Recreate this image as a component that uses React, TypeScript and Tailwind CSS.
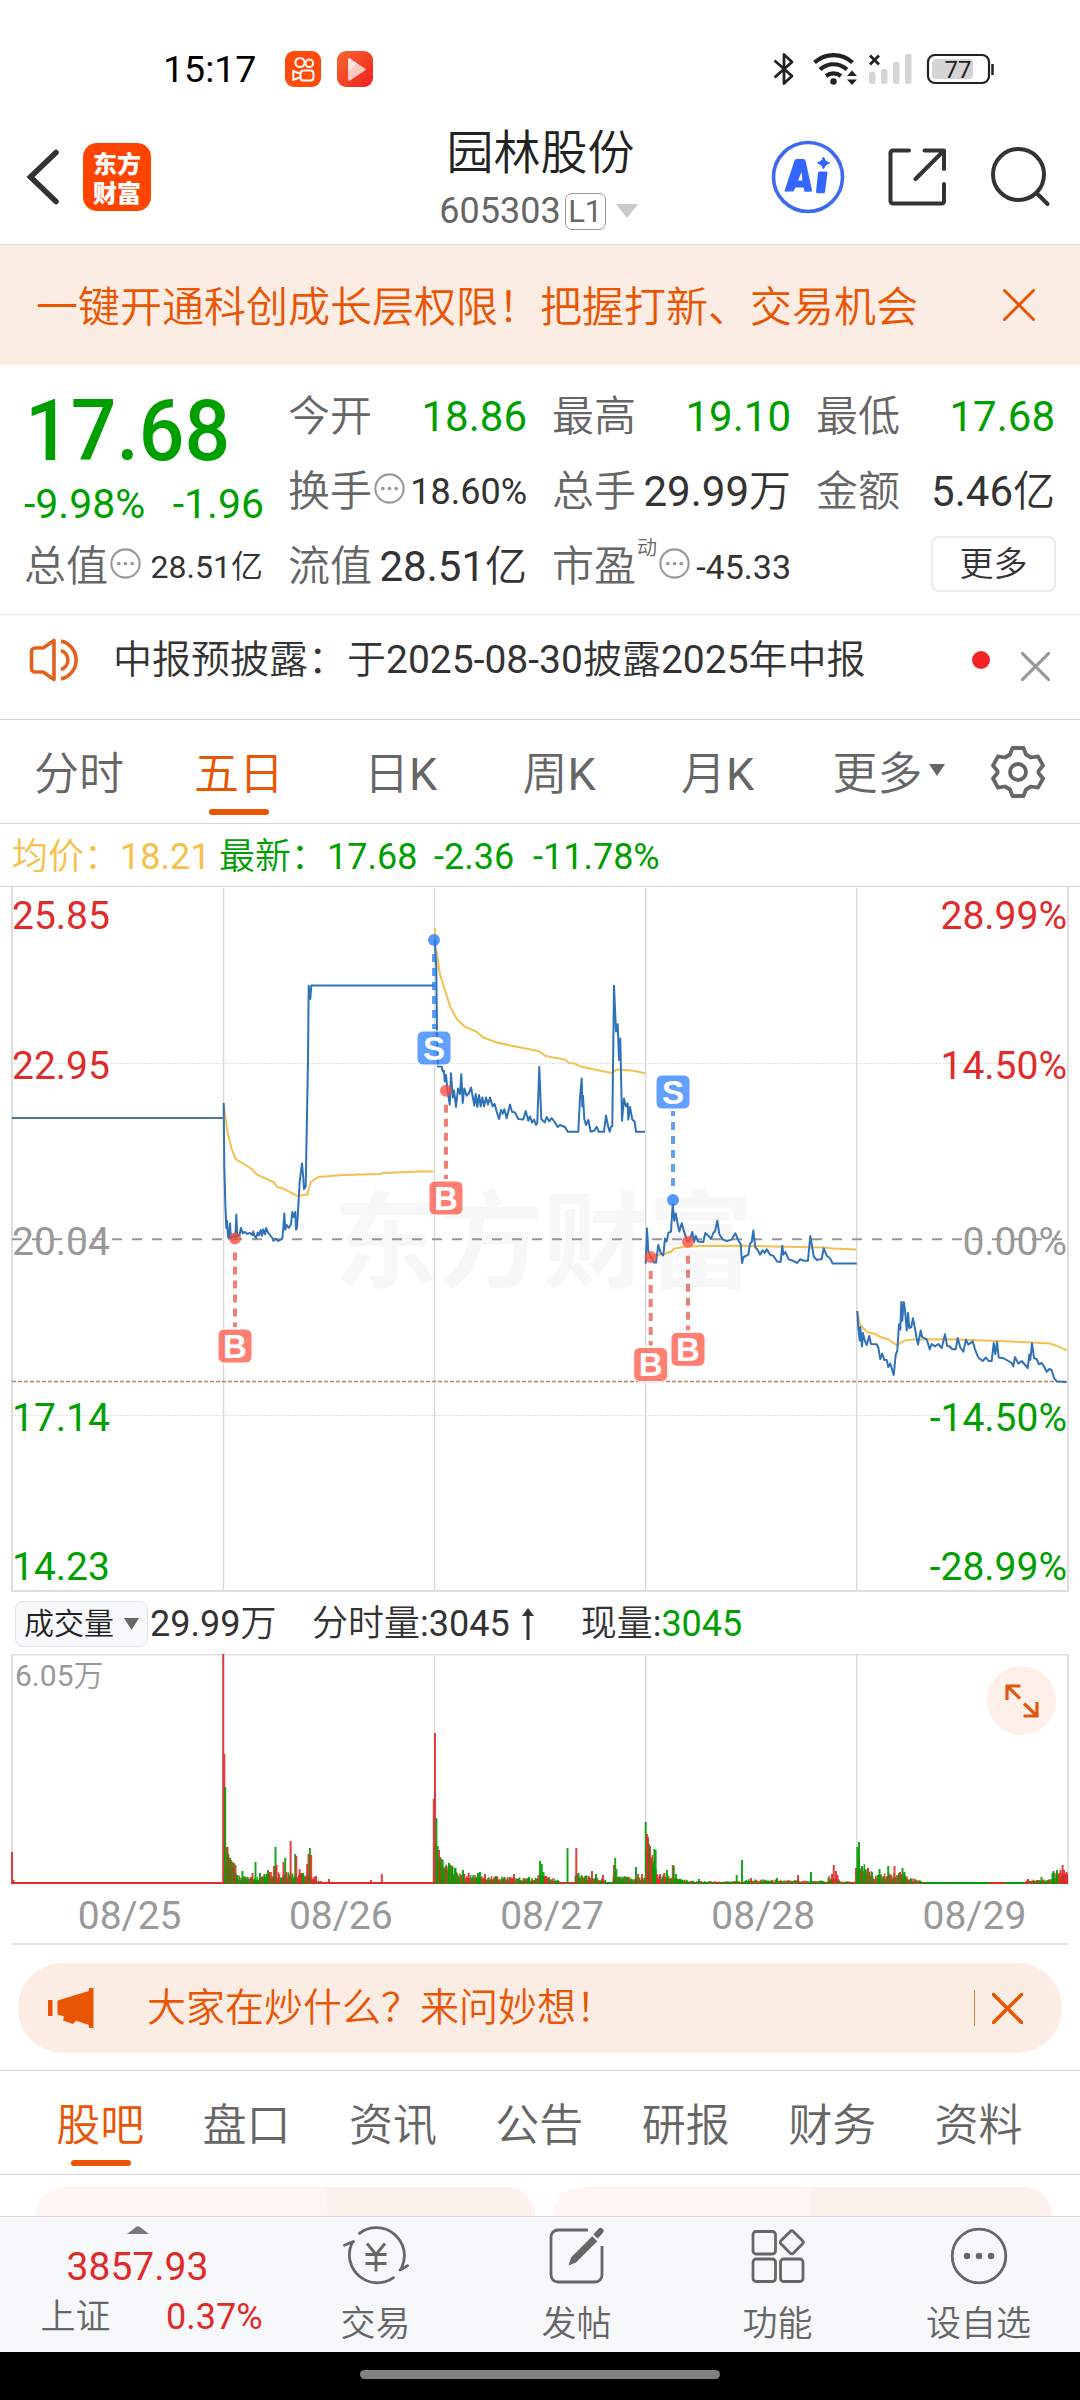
import React from "react";

const UP = "#e02b2b";
const DOWN = "#009f00";

const DAYS = ["08/25", "08/26", "08/27", "08/28", "08/29"];
const DAY_LINES = [223.5, 434.5, 645.7, 856.7];

const PERIODS = ["日K", "周K", "月K"];
const SECTIONS = ["股吧", "盘口", "资讯", "公告", "研报", "财务", "资料"];

// intraday price, one polyline per trading day
const PRICE_LINES = [
  "12,1118 222.7,1118",
  "223.7,1103 224.3,1167 225.3,1203 226.3,1228 227,1220.7 228,1236.8 229,1238.6 230,1223.6 231,1238.6 233.3,1235 235.3,1238.6 236.3,1214.6 237.3,1236.8 239.3,1235.7 241,1228 242.7,1233.2 245,1232 247.3,1234 250,1232.9 252.3,1235 253.3,1231.4 254.3,1235.7 256,1238 257.7,1232.5 259,1235.4 260.7,1230 262,1235.7 263.3,1229.3 265,1234.3 266.3,1228 267.7,1232 270,1235 272.3,1238 273.3,1240.7 275.3,1238.6 278.3,1241 282.3,1238.6 283.3,1228 284.3,1213.6 285.3,1229.6 286.7,1225 288.7,1228 291,1224.3 292.3,1212 293.7,1217 295.3,1212 296,1229.6 297,1228 298.3,1206.4 299.7,1181.4 302,1163.6 303.3,1178 304,1189.3 305.7,1186.8 308,1060 308.7,985.7 310.3,999 311.3,985.5 434,985.5",
  "434.7,940 436.3,967 437,1031.4 438,1066.4 441.7,1066.4 442.7,1071.4 444,1070.7 444.7,1081.4 446,1075 447.3,1088.6 449.7,1104.6 451,1073.2 452.7,1097.5 454,1090.4 456,1107 458,1088.6 460,1094 461.3,1074.3 462.7,1103 464.3,1088.6 466.7,1095.7 469,1093 471,1087.5 472.7,1096.4 474.3,1105.7 475.7,1094 477.3,1107 479,1095 480.7,1106.4 482.3,1097.5 484,1106.4 486,1097.5 488,1104.6 490,1097.5 492.7,1106.4 494.7,1104 496.7,1111.8 499,1119 501,1110 502.7,1113.6 504.3,1109.3 506.7,1118.2 510,1104.6 512,1111.8 515,1112.5 518.3,1119 523.3,1119.6 525.7,1111 528.3,1120.7 530,1116.4 532,1122.5 534,1119.6 536,1125 537.3,1122.5 539.3,1067 541.3,1119 544.7,1122.5 546.7,1117 549.3,1121.4 551.7,1118 555,1122.5 557.7,1127 560,1125 565,1127 567.7,1131.8 578.3,1131.8 580,1097.5 581.7,1078.6 582.3,1106.4 583,1095.7 584.3,1119 586,1125 588.3,1120 590.7,1131.8 594.3,1130.7 596.7,1126.8 598.7,1131.8 604,1131.8 606,1115.4 608,1126 609.7,1131.8 611,1127 612.3,1126 614,985.7 616,1031.4 617.7,1024.3 619,1060 620.3,1038.6 622,1120.7 624,1098.6 626,1106.4 627.7,1103.6 628.3,1119.6 630,1107 632.3,1119.6 634.7,1121.8 636,1131.8 645,1131.8",
  "645.7,1263.6 647,1228.6 648.3,1251 650.7,1257 652.7,1260 654,1262.5 656,1262.5 658.3,1245 660.7,1253 663.3,1255.4 665,1238.6 666.7,1241.4 668.3,1233.2 671,1231.4 672.7,1204.6 674.3,1220.7 675.7,1213.6 677.7,1224.3 679.3,1231.4 681.7,1223.2 684,1231.4 687.3,1241.4 689.3,1241.4 692.3,1232 694,1242 695.7,1235.7 698,1241.4 703.3,1242 705.3,1233 708.3,1235.7 711,1239 713.3,1233 715,1231.4 717.3,1220.7 719.3,1234.3 722.7,1239.3 726.7,1241 731.7,1239.6 735.3,1233.2 738.3,1240.4 740.7,1244 742,1263 743.7,1257 748.3,1254.6 750,1244 751.7,1242 753.3,1230.4 755.3,1247.5 757.3,1249.3 760,1254.6 762.7,1250.4 764.7,1253 766.7,1249.3 770,1254.6 773.3,1255.7 777.3,1261.8 780.7,1261.8 782.3,1245.7 783.3,1254.6 785.3,1252 788.7,1259.3 792.7,1260.7 797.3,1263 800,1259.3 804,1260.7 808,1260.7 810.3,1236 812,1245.7 813.7,1256.4 816.7,1260 821.7,1259 823.7,1248.2 826.7,1255.7 830,1258.2 832.7,1263.6 856.7,1263.6",
  "857.3,1311 858.3,1328 859.7,1340.4 860.3,1327 862,1346.4 863,1333 864.7,1340.4 866.7,1345 869.3,1336 871,1344 876.7,1344.3 878.3,1347.5 880.3,1359 882.3,1353.6 884.3,1360 886.7,1360 888.3,1367 890.3,1363.6 893.7,1375 895.7,1354.6 897.3,1351 899,1324.3 900.3,1329.6 901.3,1302 902.3,1320.7 903.7,1302 905,1310 906.7,1330.4 908,1313 909.3,1328 911.3,1327 913,1318.2 915,1328.6 916.7,1338.6 918,1344.6 920.7,1330.4 922,1336.8 926.7,1339.3 929.7,1349.3 931.7,1344 935,1346.4 938.3,1344 941.7,1348.2 945,1334.3 947,1345.7 950,1346.8 952.3,1349.3 955.7,1349.3 957.7,1338 960.3,1347.5 963.3,1351.8 966,1339.6 968.3,1344.6 972.7,1341.4 975,1349.3 978.3,1357.5 982.7,1361 986,1357.5 988.7,1361 991.7,1361 993.7,1343 995.3,1354 997,1342 998.7,1357.5 1003.3,1358.2 1008.3,1361 1011.7,1363 1013.3,1366.4 1015,1357 1018.3,1363.6 1021.7,1361 1027.7,1368 1029.3,1354.6 1030.3,1360 1032,1343.2 1034,1358.2 1036.7,1359 1039,1364.3 1041.7,1363 1044.3,1367 1046.7,1371.8 1049.3,1369 1051.7,1370 1054,1378 1056.7,1381.4 1066.7,1382",
];

const AVERAGE_LINES = [
  "12,1118 222.7,1118",
  "224,1106.4 227.3,1131.4 231.7,1149.3 235.7,1159 251.7,1169 256.7,1174.3 273.3,1182 277.3,1187 283.3,1188.6 297.3,1196 307.3,1194.6 310.7,1182 318.3,1177 343.3,1175 380,1174 383.3,1173 420,1171.4 433.3,1171.4",
  "435,928 435.3,945.7 437.3,956.4 440,974.3 446.7,995.7 450,1006.4 456.7,1019 465,1026.8 476,1031.4 483.3,1037.5 496.7,1042.5 516.7,1046.8 538.3,1051 545.7,1056 565,1059.6 569.3,1063 575,1063.6 580,1066.4 593.3,1069.3 611.7,1073 616.7,1069.6 633.3,1070.7 645,1073.2",
  "645.7,1260 653.3,1255.7 663.3,1254 670.7,1252 674,1248.6 683.3,1247 700,1246 740,1245.7 783.3,1246.8 823.3,1247.5 833.3,1248.6 856,1249.6",
  "857.3,1311.8 860,1324.3 866.7,1332 875,1334 881.7,1337.5 887.3,1339 896.7,1345 905,1340.4 913.3,1339.6 950,1339.3 983.3,1340.4 1016.7,1341.8 1050,1343.6 1058.3,1346.4 1066.7,1350.4",
];

type Trade = { side: "B" | "S"; x: number; dot: number; badge: number };

const TRADES: Trade[] = [
  { side: "B", x: 235, dot: 1238.6, badge: 1346 },
  { side: "S", x: 434, dot: 940, badge: 1048 },
  { side: "B", x: 446, dot: 1090.7, badge: 1198 },
  { side: "S", x: 673, dot: 1200, badge: 1092 },
  { side: "B", x: 650.7, dot: 1257, badge: 1364.5 },
  { side: "B", x: 688, dot: 1241.8, badge: 1349.3 },
];

// [x, height, direction]
const VOLUME_PEAKS: [number, number, "u" | "d"][] = [
  [12, 32, "u"], [13.5, 4, "u"],
  [223.2, 230, "u"], [224.3, 130, "u"], [225.2, 97, "d"], [226.5, 37, "d"], [227.5, 37, "u"], [228.3, 30, "d"],
  [230, 26, "u"], [231.2, 24, "d"], [232.4, 22, "u"], [234, 21, "d"], [235.5, 19, "u"], [237, 9, "d"],
  [242.4, 13, "d"], [252.5, 11, "u"], [255.5, 22, "d"], [260, 11, "d"], [264.5, 10, "d"], [268, 14, "d"], [269.5, 12, "u"],
  [274, 18, "u"], [275.5, 37, "d"], [276.6, 19, "u"], [283.4, 22, "u"], [285.2, 26, "d"], [286.2, 12, "u"],
  [290.6, 43, "u"], [295.2, 30, "d"], [296.3, 28, "u"], [299.6, 15, "u"], [301, 11, "u"], [303, 11, "d"],
  [307.2, 20, "u"], [308.5, 30, "u"], [309.9, 36, "d"], [311.2, 29, "u"], [314, 7, "u"], [316, 8, "u"],
  [329, 5, "u"], [371, 4, "u"], [381.8, 10, "u"],
  [433.8, 85, "u"], [435, 151, "u"], [436.4, 66, "d"], [437.6, 38, "d"], [439, 34, "u"], [440.3, 27, "d"],
  [442.7, 24, "d"], [446, 16, "u"], [449, 21, "d"], [452.5, 18, "d"], [455.5, 16, "d"], [463, 14, "d"], [468.6, 11, "u"],
  [478, 11, "d"], [480, 12, "d"], [485, 10, "u"], [496, 8, "d"], [514, 10, "u"], [529, 7, "d"], [538.5, 9, "u"],
  [540, 23, "d"], [541.8, 20, "d"], [543.5, 12, "d"], [545, 8, "u"], [567.5, 36, "d"], [576.3, 36, "u"], [578.5, 11, "d"],
  [592, 13, "u"], [596, 10, "d"], [603, 9, "u"], [614, 19, "u"], [615.2, 26, "d"], [616.4, 15, "d"], [636, 17, "d"],
  [638, 10, "u"], [642, 10, "u"],
  [645.7, 62, "d"], [647, 50, "u"], [648, 47, "u"], [649, 40, "d"], [650, 38, "u"], [651.3, 26, "u"], [653, 22, "d"],
  [654.4, 35, "d"], [655.6, 34, "d"], [657, 10, "u"], [660, 10, "u"], [664.5, 11, "u"], [667, 14, "d"], [672.8, 19, "u"],
  [673.8, 18, "d"], [676, 10, "d"], [699, 5, "d"], [736.7, 9, "d"], [742, 24, "d"], [751, 6, "u"], [777, 6, "d"],
  [798, 9, "u"], [811, 12, "d"], [832, 10, "u"], [833.8, 19, "u"], [836, 13, "u"], [837.5, 9, "u"],
  [856, 16, "u"], [857.4, 37, "d"], [859, 42, "d"], [862, 18, "d"], [865.5, 15, "d"], [868, 16, "u"], [879.5, 15, "d"],
  [888.2, 18, "d"], [894.5, 18, "u"], [900, 12, "u"], [902.5, 16, "d"], [904.5, 12, "d"], [1028, 5, "u"], [1041.5, 7, "d"],
  [1053.5, 13, "d"], [1057, 14, "d"], [1060.5, 14, "u"], [1062.6, 19, "u"], [1064, 14, "u"], [1066.5, 12, "u"],
];

// [from, to, height at from, height at to] of the small bars between the peaks
const VOLUME_BASE: [number, number, number, number][] = [
  [226, 236, 34, 16], [236, 262, 9, 7], [262, 273, 10, 13], [273, 312, 12, 11], [312, 322, 7, 3],
  [437, 458, 30, 14], [458, 485, 12, 8], [485, 540, 8, 6], [540, 560, 10, 4], [575, 605, 11, 5],
  [613, 645, 9, 7], [646, 656, 50, 18], [656, 680, 11, 7], [680, 700, 5, 3], [700, 745, 3, 3],
  [745, 850, 5, 3], [828, 840, 9, 6], [857, 872, 26, 13], [872, 906, 9, 13], [906, 922, 8, 3],
  [1026, 1052, 4, 6], [1052, 1067, 12, 11],
];

const noise = (n: number) => {
  const v = Math.sin(n * 12.9898) * 43758.5453;
  return v - Math.floor(v);
};

const Close = ({ className, width = 3 }: { className: string; width?: number }) => (
  <svg viewBox="0 0 32 32" className={className} fill="none" stroke="currentColor" strokeWidth={width} strokeLinecap="round">
    <path d="M1.5 1.5 30.5 30.5M30.5 1.5 1.5 30.5" />
  </svg>
);

const Info = () => (
  <svg viewBox="0 0 30 30" className="w-[31px] h-[31px] ml-0.5 shrink-0 mb-[6px]">
    <circle cx="15" cy="15" r="13.7" fill="none" stroke="#999" strokeWidth="2" />
    <circle cx="8.5" cy="15" r="1.8" fill="#999" />
    <circle cx="15" cy="15" r="1.8" fill="#999" />
    <circle cx="21.5" cy="15" r="1.8" fill="#999" />
  </svg>
);

const StatusBar = () => (
  <div className="flex items-center h-[110px] pt-[28px] pl-[163px] text-black">
    <span className="w-[122px] pt-px text-[37.5px] leading-none font-[450]">15:17</span>
    <svg viewBox="0 0 36 36" className="w-9 h-9" fill="none" stroke="#fff" strokeWidth="2">
      <rect width="36" height="36" rx="9" fill="#ff4a0a" stroke="none" />
      <circle cx="15" cy="11.5" r="4.6" />
      <circle cx="24.3" cy="12.3" r="3.8" />
      <rect x="15.5" y="19.5" width="13" height="10" rx="3" />
      <path d="M15 22.5 8.3 20.2v8.6L15 26.5" />
    </svg>
    <svg viewBox="0 0 36 36" className="w-9 h-9 ml-4">
      <defs>
        <linearGradient id="play" x1="0" y1="0" x2="1" y2="1">
          <stop offset="0" stopColor="#f8692f" />
          <stop offset="1" stopColor="#f01f1f" />
        </linearGradient>
      </defs>
      <rect width="36" height="36" rx="9" fill="url(#play)" />
      <path d="M11 8.5v20a1.2 1.2 0 0 0 1.8 1L28 19.6a1.2 1.2 0 0 0 0-2L12.8 7.5a1.2 1.2 0 0 0-1.8 1z" fill="#ffc9bf" />
      <path d="M11 8.5v13L20 12.3 12.8 7.5a1.2 1.2 0 0 0-1.8 1z" fill="#ffe3dd" />
    </svg>
    <svg viewBox="0 0 224 36" className="w-[224px] h-9 ml-[399px]" fill="none" stroke="#222">
      <path d="M2.5 9.5 20 25 12 32.5V3.5L20 11 2.5 26.5" strokeWidth="2.8" strokeLinejoin="round" />
      <g strokeWidth="4.2">
        <path d="M42.5 11.5a28 28 0 0 1 38 0" />
        <path d="M48 18.5a20 20 0 0 1 27 0" />
        <path d="M54 25a12 12 0 0 1 15 0" />
      </g>
      <g fill="#222" stroke="none">
        <circle cx="61.5" cy="30.5" r="3.2" />
        <path d="M75 25h10l-5-5.5zM75 28.5h10l-5 5.5z" />
      </g>
      <path d="m98 4.5 9 9m0-9-9 9" strokeWidth="2.8" />
      <g fill="#d4d4d4" stroke="none">
        <rect x="97" y="21" width="6.5" height="12" rx="2" />
        <rect x="109" y="18" width="6.5" height="15" rx="2" />
        <rect x="121" y="11" width="6.5" height="22" rx="2" />
        <rect x="133" y="3" width="6.5" height="30" rx="2" />
      </g>
      <rect x="156" y="4" width="61" height="28" rx="7" strokeWidth="2.2" />
      <rect x="160" y="8" width="41" height="20" rx="4" fill="#d4d4d4" stroke="none" />
      <path d="M220.5 13v11" strokeWidth="2.5" />
      <text x="186" y="26.5" textAnchor="middle" fontSize="24" fill="#222" stroke="none">77</text>
    </svg>
  </div>
);

const Header = () => (
  <div className="flex items-center h-[135px] border-b border-[#d8d8d8] pl-[26px]">
    <svg viewBox="0 0 34 56" className="w-[34px] h-14" fill="none" stroke="#333" strokeWidth="5.5" strokeLinecap="round">
      <path d="M30 3.5 4.5 28 30 52.5" />
    </svg>
    <div className="ml-[23px] w-[68px] h-[68px] rounded-[14px] bg-[#ff4400] text-white font-['Noto_Sans_CJK_SC'] font-black text-[24px] leading-[29px] flex flex-col items-center justify-center">
      <span>东方</span>
      <span>财富</span>
    </div>
    <div className="w-[620px] flex flex-col items-center pl-[159px]">
      <div className="text-[47px] leading-[60px] h-[68px] text-[#222]">园林股份</div>
      <div className="flex items-center h-10 text-[36px] leading-none text-[#666] -ml-1">
        <span>605303</span>
        <span className="ml-1 w-[41px] h-[37px] rounded-[7px] border border-[#999] text-[31px] leading-[35px] text-center">L1</span>
        <svg viewBox="0 0 22 14" className="w-[22px] h-3.5 ml-2.5">
          <path d="M0 0h22L11 14z" fill="#c9c9c9" />
        </svg>
      </div>
    </div>
    <svg viewBox="0 0 74 74" className="w-[74px] h-[74px]">
      <circle cx="37" cy="37" r="34.5" fill="none" stroke="#3d6bef" strokeWidth="3.6" />
      <path d="M13.5 51 23.5 20.5a2 2 0 0 1 2-1.5h7a2 2 0 0 1 2 1.6L41 50a1.5 1.5 0 0 1-1.5 1.8H33.5l-1-4.3h-8l-1.6 3.2a1.5 1.5 0 0 1-1.4.9H14.5a.8.8 0 0 1-1-.6zM27 40.5h4.5L30.5 32z" fill="#3366ff" fillRule="evenodd" />
      <path d="M48.5 31.5h7a1 1 0 0 1 1 1L54 52a1.5 1.5 0 0 1-1.5 1.3h-6a1.5 1.5 0 0 1-1.5-1.7l2-18.8a1.5 1.5 0 0 1 1.5-1.3z" fill="#3366ff" />
      <path d="m52.5 17 2 4 4 2-4 2-2 4-2-4-4-2 4-2z" fill="#3366ff" stroke="#3366ff" strokeLinejoin="round" />
    </svg>
    <svg viewBox="0 0 60 60" className="w-[60px] h-[60px] ml-[42px]" fill="none" stroke="#333" strokeWidth="4" strokeLinecap="round" strokeLinejoin="round">
      <path d="M22 3.5H6A2.5 2.5 0 0 0 3.5 6v48A2.5 2.5 0 0 0 6 56.5h49A2.5 2.5 0 0 0 57 54V37" />
      <path d="M37.5 3.5H57V22M57 3.5 28.5 32" />
    </svg>
    <svg viewBox="0 0 62 60" className="w-[62px] h-[60px] ml-[42px]" fill="none" stroke="#333" strokeWidth="4" strokeLinecap="round">
      <circle cx="29.5" cy="27.5" r="25.5" />
      <path d="M48 46.5 58.5 57" />
    </svg>
  </div>
);

const Row = ({ label, value, className = "" }: { label: React.ReactNode; value: string; className?: string }) => (
  <div className="flex items-center justify-between h-[75px] pr-px text-[42px] leading-none whitespace-nowrap">
    <span className="flex items-center text-[#666]">{label}</span>
    <span className={`text-[#333] ${className}`}>{value}</span>
  </div>
);

const Quote = () => (
  <div className="grid grid-cols-4 gap-x-6 h-[250px] pt-[14px] px-6 border-b border-[#ededed]">
    <div>
      <div className="h-[99px] flex items-center pt-1 pl-px">
        <span className="text-[86px] leading-none font-medium text-[#009f00] origin-left scale-x-[.935]">17.68</span>
      </div>
      <div className="h-[51px] flex items-center justify-between pt-0.5 text-[41px] leading-none text-[#009f00]">
        <span>-9.98%</span>
        <span>-1.96</span>
      </div>
      <Row label={<>总值<Info /></>} value="28.51亿" className="text-[32px]" />
    </div>
    <div>
      <Row label="今开" value="18.86" className="text-[#009f00]!" />
      <Row label={<>换手<Info /></>} value="18.60%" className="text-[36px]" />
      <Row label="流值" value="28.51亿" />
    </div>
    <div>
      <Row label="最高" value="19.10" className="text-[#009f00]!" />
      <Row label="总手" value="29.99万" />
      <Row label={<>市盈<span className="text-[20px] self-start ml-px -mt-2">动</span><Info /></>} value="-45.33" className="text-[34px]" />
    </div>
    <div>
      <Row label="最低" value="17.68" className="text-[#009f00]!" />
      <Row label="金额" value="5.46亿" />
      <div className="h-[69px] flex items-center justify-end">
        <div className="w-[125px] h-[56px] rounded-lg border-2 border-[#ebebeb] flex items-center justify-center text-[34px] leading-none text-[#333]">更多</div>
      </div>
    </div>
  </div>
);

const News = () => (
  <div className="flex items-center h-[105px] pb-[14px] pl-[29px] border-b border-[#d4d4d4] text-[#333]">
    <svg viewBox="0 0 54 44" className="w-[54px] h-11" fill="none" stroke="#e2621c" strokeWidth="3.6" strokeLinejoin="round">
      <path d="M25 2.5v39L14 34H6a3.5 3.5 0 0 1-3.5-3.5v-17A3.5 3.5 0 0 1 6 10h8z" />
      <path d="M32 12.5a10 10 0 0 1 0 19M32 3a19.5 19.5 0 0 1 0 38" />
    </svg>
    <span className="ml-[30px] w-[859px] text-[39px] leading-none whitespace-nowrap">中报预披露：于2025-08-30披露2025年中报</span>
    <span className="w-[18px] h-[18px] rounded-full bg-[#f32424]" />
    <Close className="w-[29px] h-[29px] ml-[31px] mt-3 text-[#999]" width={3.5} />
  </div>
);

const PeriodTabs = () => (
  <div className="flex items-center h-[104px] pl-[34px] border-b border-[#d8d8d8] text-[45px] leading-none text-[#666]">
    <span className="w-[160px] pt-[5px]">分时</span>
    <div className="relative w-[170px] h-full flex items-center pt-[5px] text-[#ea5504]">
      五日
      <span className="absolute left-[15px] bottom-[8px] w-[60px] h-1.5 rounded-full bg-[#ea5504]" />
    </div>
    {PERIODS.map((p) => (
      <span key={p} className="w-[158.5px] pt-[5px]">{p}</span>
    ))}
    <span className="-ml-[7px] pt-[5px]">更多</span>
    <svg viewBox="0 0 16 12" className="w-4 h-3 ml-1.5 mb-1">
      <path d="M0 0h16L8 12z" fill="#666" />
    </svg>
    <svg viewBox="0 0 54 54" className="w-[54px] h-[54px] ml-[46px]" fill="none" stroke="#666" strokeWidth="3.8" strokeLinejoin="round">
      <path d="M21.5 3h11l2.5 6.5 5 3 7-1.2 5 9.2-4.5 5.5v2l4.5 5.5-5 9.2-7-1.2-5 3-2.5 6.5h-11L19 44.5l-5-3-7 1.2-5-9.2L6.5 28v-2L2 20.5l5-9.2 7 1.2 5-3z" />
      <circle cx="27" cy="27" r="8" />
    </svg>
  </div>
);

const Marker = ({ side, x, dot, badge }: Trade) => {
  const color = side === "B" ? "#ff4a38" : "#1f78ff";
  const dir = badge > dot ? 1 : -1;
  return (
    <g>
      <line x1={x} x2={x} y1={dot + dir * 14} y2={badge - dir * 19} stroke={side === "B" ? "#ea4a38" : "#1f78ee"} strokeOpacity=".7" strokeWidth="4" strokeDasharray="8 6" />
      <circle cx={x} cy={dot} r="6" fill={color} fillOpacity=".75" />
      <rect x={x - 17} y={badge - 17} width="34" height="34" rx="6" fill={color} fillOpacity=".7" stroke="#fff" />
      <text x={x} y={badge + 11.5} textAnchor="middle" fontFamily="Liberation Sans" fontWeight="700" fontSize="33" fill="#fff">{side}</text>
    </g>
  );
};

const PriceChart = () => (
  <svg viewBox="0 887 1080 706" className="block w-[1080px] h-[706px]" fill="none">
    <text x="543" y="1279" textAnchor="middle" fontFamily="Noto Sans CJK SC" fontSize="105" fontWeight="700" fill="#f7f7f7">东方财富</text>
    <g stroke="#d9d9d9" strokeWidth="1.5">
      {DAY_LINES.map((x) => (
        <line key={x} x1={x} x2={x} y1="888" y2="1590" />
      ))}
      <line x1="12" x2="1068" y1="1063.5" y2="1063.5" strokeDasharray="1.5 1.5" strokeWidth="1" />
      <line x1="12" x2="1068" y1="1415.5" y2="1415.5" strokeDasharray="1.5 1.5" strokeWidth="1" />
    </g>
    <path d="M12 887V1591H1068V887" stroke="#dedede" strokeWidth="2" />
    <g fontSize="39">
      <text x="12" y="929" fill={UP}>25.85</text>
      <text x="12" y="1079" fill={UP}>22.95</text>
      <text x="12" y="1254.5" fill="#999">20.04</text>
      <text x="12" y="1430.5" fill={DOWN}>17.14</text>
      <text x="12" y="1579.5" fill={DOWN}>14.23</text>
      <g textAnchor="end">
        <text x="1067" y="929" fill={UP}>28.99%</text>
        <text x="1067" y="1079" fill={UP}>14.50%</text>
        <text x="1067" y="1254.5" fill="#999">0.00%</text>
        <text x="1067" y="1430.5" fill={DOWN}>-14.50%</text>
        <text x="1067" y="1579.5" fill={DOWN}>-28.99%</text>
      </g>
    </g>
    <line x1="12" x2="1068" y1="1239.3" y2="1239.3" stroke="#969696" strokeWidth="2" strokeDasharray="10 10" />
    <line x1="12" x2="1068" y1="1381.5" y2="1381.5" stroke="#b9845a" strokeWidth="1.5" strokeDasharray="4 2" />
    {AVERAGE_LINES.map((points, i) => (
      <polyline key={i} points={points} stroke="#f3c04f" strokeWidth="2" />
    ))}
    {PRICE_LINES.map((points, i) => (
      <polyline key={i} points={points} stroke={i === 0 ? "#4b7796" : "#2f72b8"} strokeWidth="2" strokeLinejoin="round" />
    ))}
    {TRADES.map((t) => (
      <Marker key={`${t.side}${t.x}`} {...t} />
    ))}
  </svg>
);

const VolumeChart = () => {
  const base = VOLUME_BASE.flatMap(([from, to, a, b]) => {
    const bars = [];
    for (let x = from; x < to; x += 0.88) {
      const top = a + ((b - a) * (x - from)) / (to - from);
      bars.push({ x, h: top * (0.45 + 0.55 * noise(x)), up: noise(x + 7) > 0.55 });
    }
    return bars;
  });
  return (
    <svg viewBox="0 1654 1080 231" className="block w-[1080px] h-[231px]" fill="none">
      <g stroke="#d9d9d9" strokeWidth="1.5">
        {DAY_LINES.map((x) => (
          <line key={x} x1={x} x2={x} y1="1654" y2="1884" />
        ))}
      </g>
      <path d="M12 1884V1654.5H1068V1884" stroke="#e0e0e0" strokeWidth="2" />
      <text x="15" y="1685.5" fontSize="30" fill="#999">6.05万</text>
      <rect x="11" y="1882" width="1056" height="2" fill={UP} />
      {[440, 520, 590, 660, 700, 735, 760, 790, 868, 905, 925, 950, 975, 1005].map((x, i) => (
        <rect key={x} x={x} y="1882" width={14 + (i % 4) * 5} height="2" fill={DOWN} />
      ))}
      {base.map((b, i) => (
        <rect key={i} x={b.x - 0.5} y={1884 - b.h} width="1.6" height={b.h} fill={b.up ? UP : DOWN} fillOpacity=".9" />
      ))}
      {VOLUME_PEAKS.map(([x, h, d]) => (
        <rect key={x} x={x - 1} y={1884 - h} width="2" height={h} fill={d === "u" ? UP : DOWN} fillOpacity=".9" />
      ))}
    </svg>
  );
};

const Volume = () => (
  <>
    <div className="flex items-center h-[61px] pl-[15px] text-[36px] leading-none text-[#333] whitespace-nowrap">
      <div className="flex items-center w-[133px] h-[46px] mr-[2px] pl-[8px] rounded-lg border border-[#e2e4e8] bg-[#f6f8fa] text-[30px] text-[#222]">
        成交量
        <svg viewBox="0 0 15 12" className="w-[15px] h-3 ml-2.5">
          <path d="M0 0h15L7.5 12z" fill="#666" />
        </svg>
      </div>
      <span className="w-[162px]">29.99万</span>
      <span>分时量:3045</span>
      <svg viewBox="0 0 12 32" className="w-3 h-8 ml-3 mr-[47px]">
        <path d="M6 0 12 8H7.5v24h-3V8H0z" fill="#333" />
      </svg>
      <span>现量:<span className="text-[#009f00]">3045</span></span>
    </div>
    <div className="relative">
      <VolumeChart />
      <div className="absolute left-[987px] top-[12px] w-[69px] h-[69px] rounded-full bg-[#fef0e9] flex items-center justify-center">
        <svg viewBox="0 0 34 34" className="w-[34px] h-[34px]" fill="none" stroke="#dd5a14" strokeWidth="3.2">
          <path d="M15.5 2H2v14M2 2l13 12.5M18.5 32H32V18M32 32 19 19.5" />
        </svg>
      </div>
    </div>
    <div className="mx-3 h-[60px] flex items-center pt-1 border-b-2 border-[#e4e4e4] text-[39px] leading-none text-[#999]">
      {DAYS.map((d) => (
        <span key={d} className="flex-1 pl-6 text-center">{d}</span>
      ))}
    </div>
  </>
);

const AskBanner = () => (
  <div className="h-[126px] pt-[18px] px-[18px] border-b border-[#d8d8d8]">
    <div className="flex items-center h-[90px] rounded-full bg-[#fcede4] pl-[30px] text-[#ea5504]">
      <svg viewBox="0 0 46 40" className="w-[46px] h-10" fill="#ea5504">
        <path d="M0 12h4.5v16H0zM9.5 12.5 41 3V0h4.5v40H41v-3l-13-4.2-3 3.2-10-3.5 1-4-6.5-2z" />
      </svg>
      <span className="ml-[53px] w-[827px] text-[39px] leading-none">大家在炒什么？来问妙想！</span>
      <span className="w-px h-9 bg-[#d98352]" />
      <Close className="w-[31px] h-[31px] ml-[17px]" width={3.8} />
    </div>
  </div>
);

const SectionTabs = () => (
  <div className="flex items-center h-[104px] pl-[27px] border-b border-[#d8d8d8] text-[44px] leading-none text-[#666]">
    {SECTIONS.map((s, i) => (
      <div key={s} className={`relative w-[146.4px] h-full flex items-center justify-center pt-[6px] ${i === 0 ? "text-[#ea5504]" : ""}`}>
        {s}
        {i === 0 && <span className="absolute bottom-2 left-[44px] w-[60px] h-1.5 rounded-full bg-[#ea5504]" />}
      </div>
    ))}
  </div>
);

const Cards = () => (
  <div className="flex gap-[18px] h-[41px] pt-3 pl-9 overflow-hidden">
    {[0, 1].map((i) => (
      <div key={i} className="w-[499px] h-20 rounded-[28px] overflow-hidden flex justify-end bg-[#fff6f3]">
        <div className={i === 0 ? "w-[209px] bg-[#fdf1ee]" : "w-[241px] bg-[#fdf1ee]"} />
      </div>
    ))}
  </div>
);

const BottomBar = () => (
  <div className="flex h-[136px] border-t border-[#d4d6d8] bg-[#f6f8fa] text-[#666] text-[35px] leading-none">
    <div className="w-[275px] flex flex-col items-center pt-[9px]">
      <svg viewBox="0 0 22 8" className="w-[22px] h-2">
        <path d="M0 8 9 1q2-1.5 4 0l9 7z" fill="#77797d" />
      </svg>
      <div className="mt-2.5 text-[39px] leading-[46px] text-[#e02b2b]">3857.93</div>
      <div className="mt-[9px] ml-[28px] w-[222px] flex items-center justify-between">
        <span>上证</span>
        <span className="text-[36px] text-[#e02b2b]">0.37%</span>
      </div>
    </div>
    <div className="w-[201px] flex flex-col items-center pt-2">
      <svg viewBox="0 0 66 62" className="w-[66px] h-[62px]" fill="none" stroke="#666" strokeWidth="2.8" strokeLinecap="round" strokeLinejoin="round">
        <path d="M16.5 8.3A28 28 0 0 1 58.5 43L57 45l7.5-4.2M50.5 52.7A28 28 0 0 1 9 18l1.5-1.5L1.5 20.2" />
        <path d="M24 18.500l9 11 9-11M22.500 29.500h21M22.500 38.500h21M33 29.500v17" strokeLinecap="butt" />
      </svg>
      <span className="mt-5">交易</span>
    </div>
    <div className="w-[201px] flex flex-col items-center pt-2">
      <svg viewBox="0 0 58 62" className="w-[58px] h-[62px]" fill="none" stroke="#666" strokeWidth="2.8">
        <path d="M40 5H10a7 7 0 0 0-7 7v38a7 7 0 0 0 7 7h37a7 7 0 0 0 7-7V21" />
        <path d="m20.5 40.5 2.5-8L44.5 11l5 5L28 37.5z" fill="#666" stroke="none" />
        <path d="m47.5 11.5 5-5.5" strokeWidth="6" strokeLinecap="round" />
        <path d="m44 9.5 7 7" stroke="#f6f8fa" strokeWidth="2" />
      </svg>
      <span className="mt-5">发帖</span>
    </div>
    <div className="w-[201px] flex flex-col items-center pt-2">
      <svg viewBox="0 0 56 62" className="w-14 h-[62px]" fill="none" stroke="#666" strokeWidth="2.8">
        <rect x="3" y="6.5" width="22.5" height="22.5" rx="3" />
        <rect x="3" y="34" width="22.5" height="22.5" rx="3" />
        <rect x="30.5" y="34" width="22.5" height="22.5" rx="3" />
        <rect x="33" y="8.5" width="17.5" height="17.5" rx="2.5" transform="rotate(45 41.7 17.3)" />
      </svg>
      <span className="mt-5">功能</span>
    </div>
    <div className="w-[201px] flex flex-col items-center pt-2">
      <svg viewBox="0 0 58 62" className="w-[58px] h-[62px]" fill="#666">
        <circle cx="29" cy="31" r="26.8" fill="none" stroke="#666" strokeWidth="2.8" />
        <circle cx="17" cy="31" r="3.2" />
        <circle cx="29" cy="31" r="3.2" />
        <circle cx="41" cy="31" r="3.2" />
      </svg>
      <span className="mt-5">设自选</span>
    </div>
  </div>
);

export default function App() {
  return (
    <div className="w-[1080px] h-[2400px] overflow-hidden bg-white font-[Roboto,'Noto_Sans_CJK_SC_DemiLight','Noto_Sans_CJK_SC',sans-serif]">
      <StatusBar />
      <Header />
      <div className="flex items-center h-[120px] bg-[#fcede4] pl-9 text-[#ea5504]">
        <span className="w-[967px] pt-[5px] text-[42px] leading-none">一键开通科创成长层权限！把握打新、交易机会</span>
        <Close className="w-8 h-8" />
      </div>
      <Quote />
      <News />
      <PeriodTabs />
      <div className="flex items-center h-[63px] pt-[3px] pl-3 border-b border-[#d8d8d8] text-[36px] leading-none text-[#009f00] whitespace-nowrap">
        <span className="w-[207px] text-[#f6c04a]">均价：18.21</span>
        <span className="w-[215px]">最新：17.68</span>
        <span className="w-[99px]">-2.36</span>
        <span>-11.78%</span>
      </div>
      <PriceChart />
      <Volume />
      <AskBanner />
      <SectionTabs />
      <Cards />
      <BottomBar />
      <div className="h-12 bg-black flex justify-center pt-[18px]">
        <div className="w-[360px] h-[9px] rounded-full bg-[#808080]" />
      </div>
    </div>
  );
}
